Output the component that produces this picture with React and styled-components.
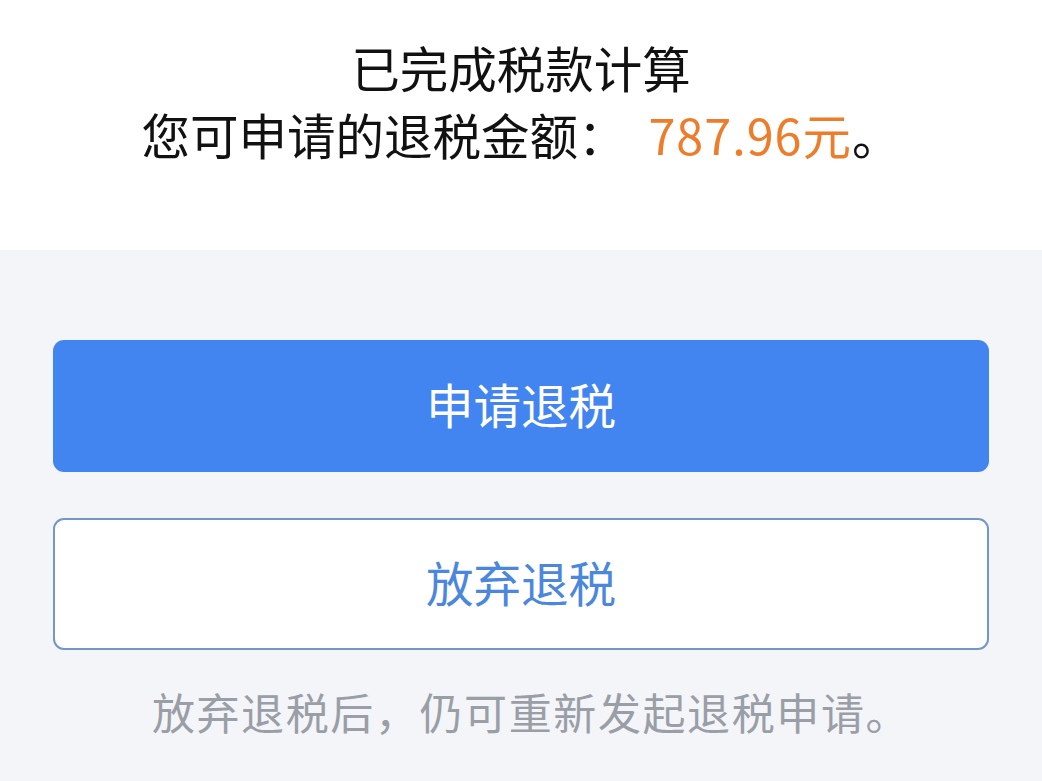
import React from "react";
import styled, { createGlobalStyle } from "styled-components";

const GlobalStyle = createGlobalStyle`
  html, body {
    margin: 0;
    padding: 0;
    background: #f3f5f9;
    font-family: "Noto Sans CJK SC", "Noto Sans", sans-serif;
  }
`;

const Page = styled.div`
  width: 1042px;
  min-height: 781px;
  display: flex;
  flex-direction: column;
  background: #f3f5f9;
`;

const Header = styled.div`
  height: 250px;
  box-sizing: border-box;
  padding-top: 34px;
  background: #fff;
  display: flex;
  flex-direction: column;
  align-items: center;
`;

const Line = styled.div`
  font-size: 48.5px;
  line-height: 67px;
  color: #111;
  white-space: nowrap;
`;

const Amount = styled.span`
  color: #ee7d2b;
  margin-left: 22px;
  letter-spacing: 1px;
`;

const Actions = styled.div`
  padding: 90px 53px 0;
  display: flex;
  flex-direction: column;
  gap: 46px;
`;

const Button = styled.button`
  height: 132px;
  width: 100%;
  padding: 0 0 6px;
  border-radius: 11px;
  font-family: inherit;
  font-size: 47.5px;
  cursor: pointer;
  border: ${(p) => (p.$outline ? "2px solid #7397c6" : "none")};
  background: ${(p) => (p.$outline ? "#fff" : "#4285f0")};
  color: ${(p) => (p.$outline ? "#4a87dd" : "#fff")};
`;

const Note = styled.p`
  margin: 36px 0 0;
  padding-left: 20px;
  text-align: center;
  font-size: 43px;
  letter-spacing: 1.6px;
  line-height: 50px;
  color: #9a9ea6;
`;

export default function App() {
  return (
    <Page>
      <GlobalStyle />
      <Header>
        <Line>已完成税款计算</Line>
        <Line>
          您可申请的退税金额：<Amount>787.96元</Amount>。
        </Line>
      </Header>
      <Actions>
        <Button>申请退税</Button>
        <Button $outline>放弃退税</Button>
      </Actions>
      <Note>放弃退税后，仍可重新发起退税申请。</Note>
    </Page>
  );
}
